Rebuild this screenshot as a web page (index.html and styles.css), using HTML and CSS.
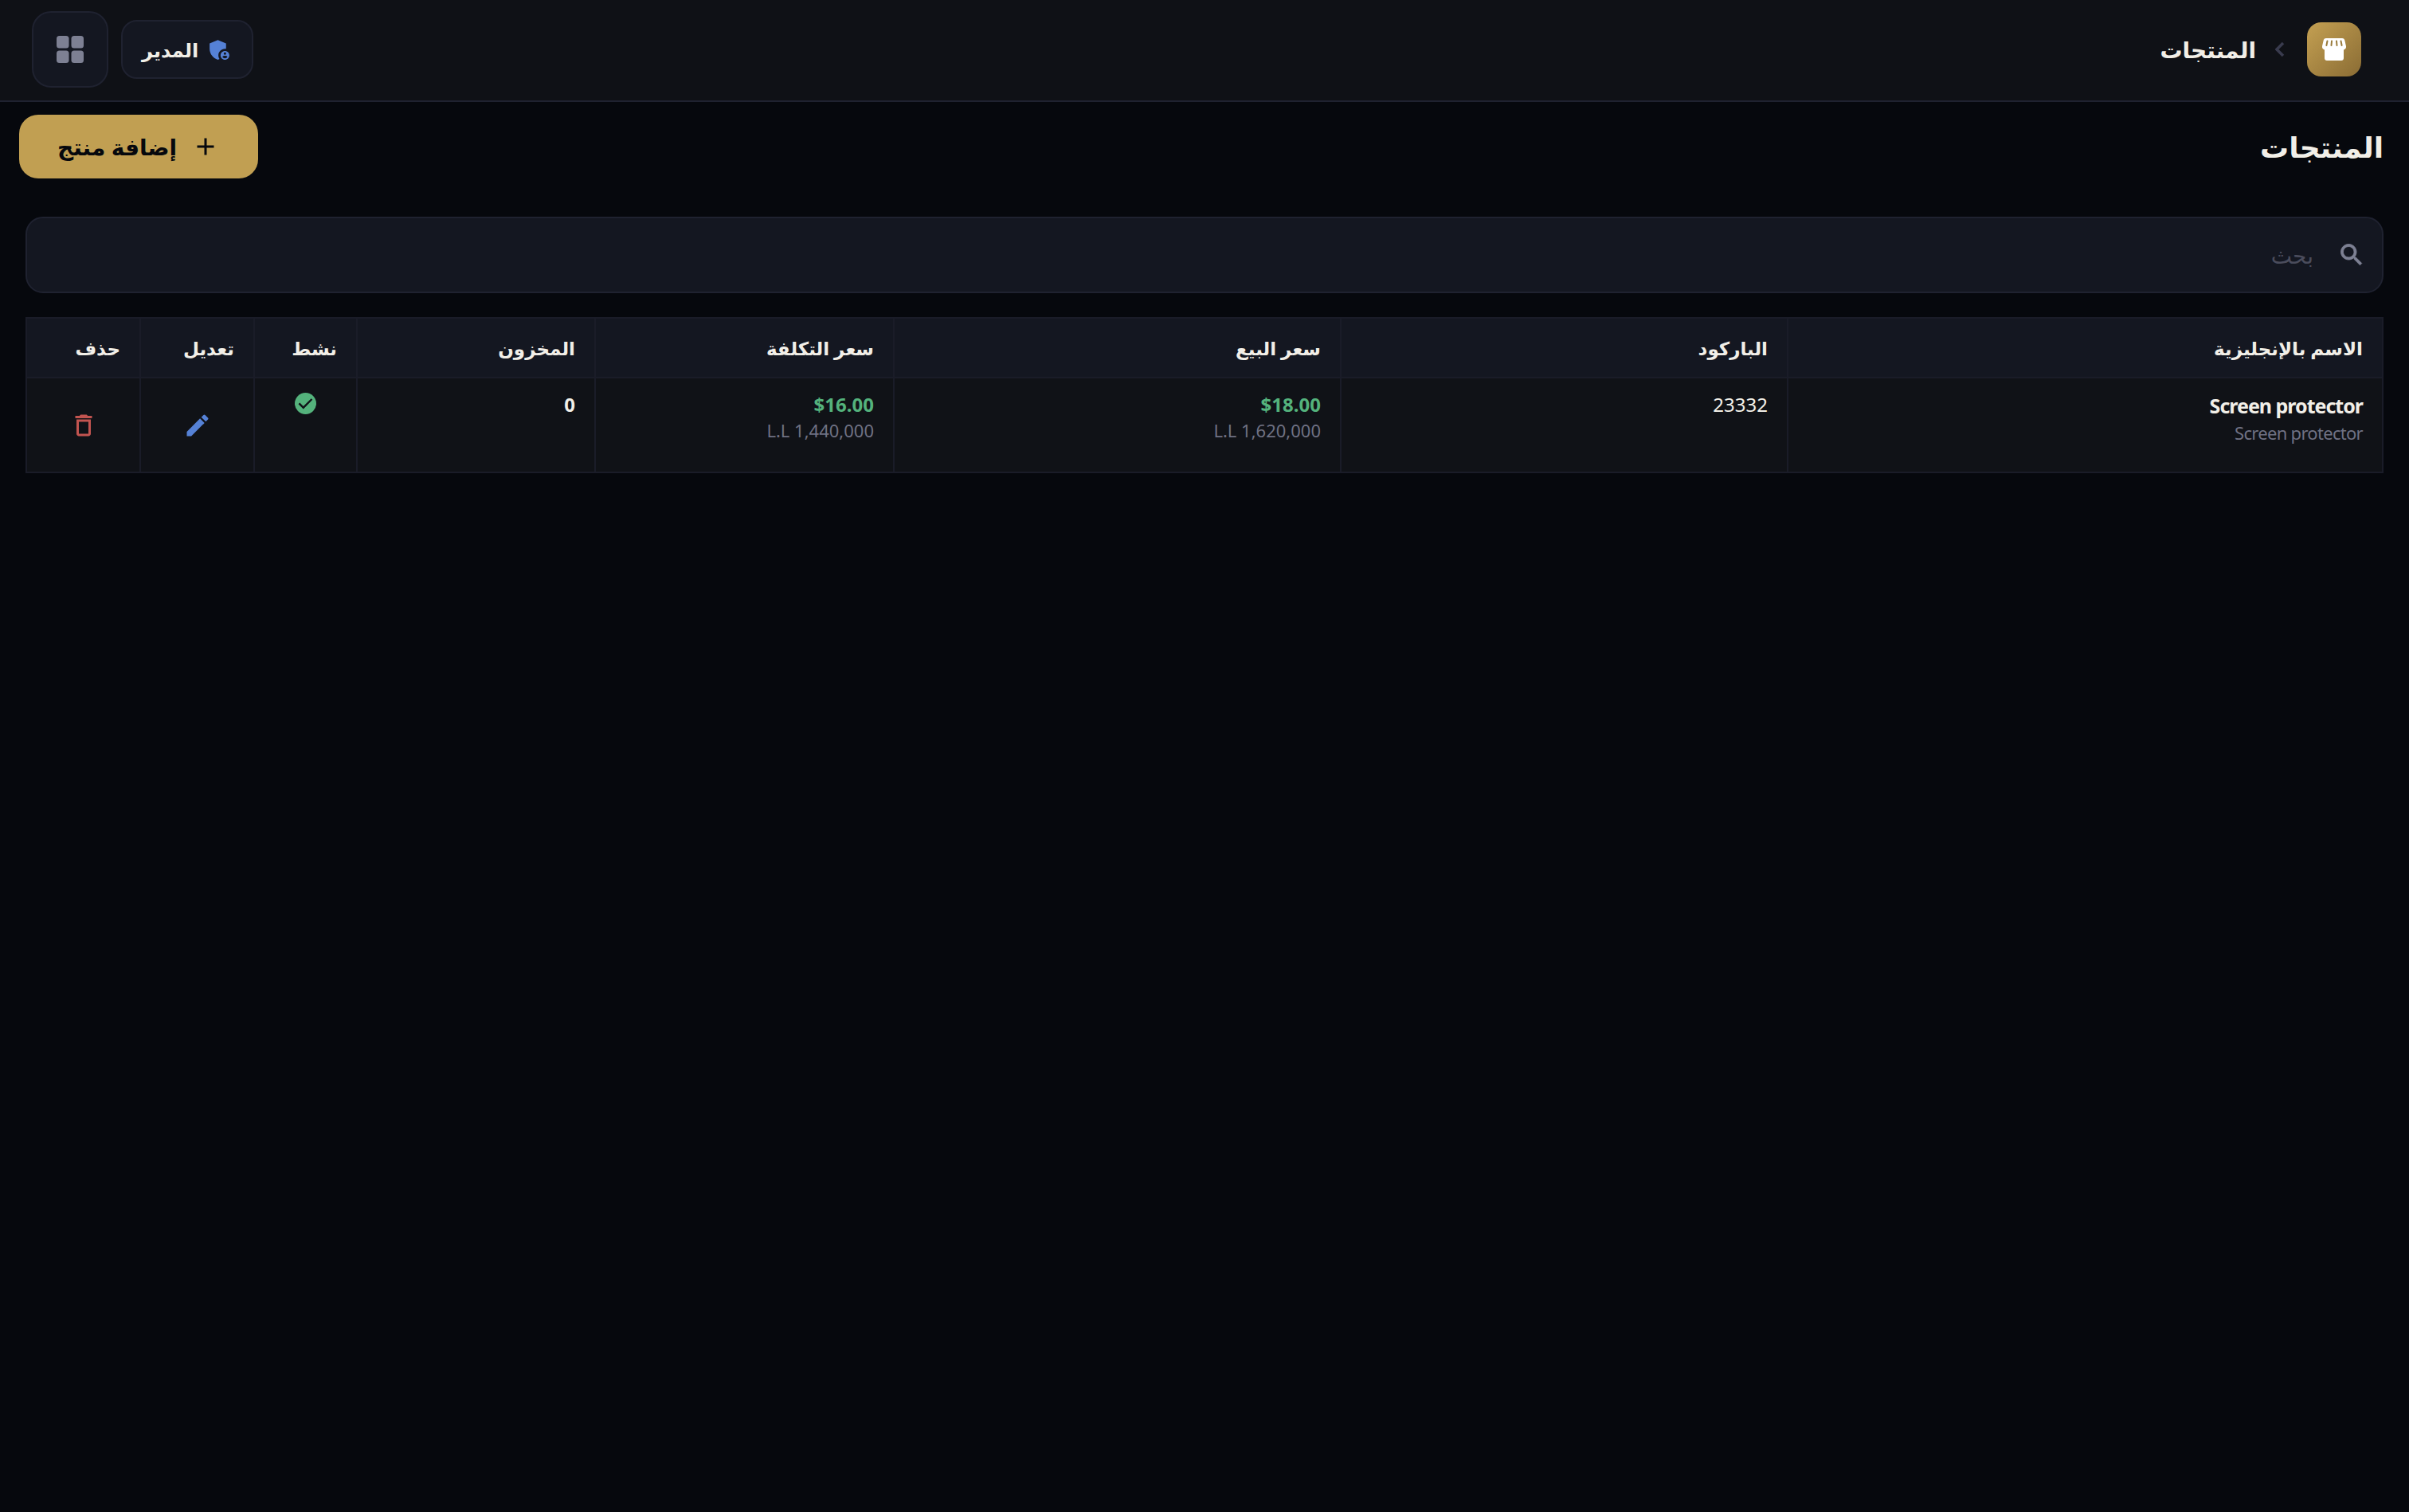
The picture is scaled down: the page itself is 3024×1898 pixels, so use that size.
FILE: index.html
```html
<!DOCTYPE html>
<html lang="ar" dir="rtl">
<head>
    <meta charset="UTF-8">
    <title>المنتجات</title>
    <link rel="stylesheet" href="styles.css">
</head>
<body>
    <header class="topbar">
        <div class="crumbs">
            <div class="logo-box">
                <svg class="logo-icon" viewBox="0 0 30 28">
                    <path d="M5 0h20c2 0 3 1 3.400 3L30 10c.3 2.400-1 4-3 4.500V25c0 1.700-1.300 3-3 3H6c-1.700 0-3-1.300-3-3V14.500C1 14-.3 12.400 0 10l1.600-7C2 1 3 0 5 0z" fill="#fff"/>
                    <path d="M6.500 3.500 5.400 9M12 3.500 11.500 9M18 3.500 18.500 9M23.500 3.500 24.600 9" stroke="#9a7b3c" stroke-width="2" stroke-linecap="round" fill="none"/>
                </svg>
            </div>
            <svg class="crumb-sep" viewBox="0 0 12 20"><path d="M10 2 2 10l8 8" fill="none" stroke="#393b4e" stroke-width="3.500"/></svg>
            <span class="crumb-title">المنتجات</span>
        </div>
        <div class="top-actions">
            <div class="role-chip">
                <svg class="role-icon" viewBox="0 0 24 24"><path d="M17 11c.34 0 .67.04 1 .09V6.270L10.500 3 3 6.270v4.910c0 4.540 3.200 8.790 7.500 9.820.55-.13 1.080-.32 1.600-.55-.69-.98-1.100-2.170-1.100-3.450 0-3.310 2.690-6 6-6z"/><path d="M17 13c-2.210 0-4 1.790-4 4s1.790 4 4 4 4-1.790 4-4-1.790-4-4-4zm0 1.380c.62 0 1.120.51 1.120 1.120s-.51 1.120-1.120 1.120-1.120-.51-1.120-1.120.5-1.120 1.120-1.120zm0 5.370c-.93 0-1.740-.46-2.240-1.170.05-.72 1.510-1.080 2.240-1.080s2.190.36 2.240 1.080c-.5.71-1.310 1.170-2.240 1.170z"/></svg>
                <span>المدير</span>
            </div>
            <button class="grid-btn" type="button">
                <svg class="grid-icon" viewBox="0 0 34 34">
                    <rect x="0" y="0" width="15.500" height="15.500" rx="3.500"/>
                    <rect x="18.500" y="0" width="15.500" height="15.500" rx="3.500"/>
                    <rect x="0" y="18.500" width="15.500" height="15.500" rx="3.500"/>
                    <rect x="18.500" y="18.500" width="15.500" height="15.500" rx="3.500"/>
                </svg>
            </button>
        </div>
    </header>

    <main>
        <div class="page-head">
            <h1>المنتجات</h1>
            <button class="add-btn" type="button">
                <svg class="add-icon" viewBox="0 0 24 24"><path d="M19 13h-6v6h-2v-6H5v-2h6V5h2v6h6v2z"/></svg>
                <span>إضافة منتج</span>
            </button>
        </div>

        <div class="search-box">
            <svg class="search-icon" viewBox="0 0 24 24"><path d="M15.500 14h-.79l-.28-.27C15.410 12.590 16 11.110 16 9.500 16 5.910 13.090 3 9.500 3S3 5.910 3 9.500 5.910 16 9.500 16c1.610 0 3.090-.59 4.230-1.570l.27.28v.79l5 4.990L20.490 19l-4.990-5zm-6 0C7.010 14 5 11.990 5 9.500S7.010 5 9.500 5 14 7.010 14 9.500 11.990 14 9.500 14z"/></svg>
            <input class="search-input" type="text" placeholder="بحث">
        </div>

        <table class="products">
            <colgroup>
                <col class="c-name"><col class="c-barcode"><col class="c-sale"><col class="c-cost">
                <col class="c-stock"><col class="c-active"><col class="c-edit"><col class="c-del">
            </colgroup>
            <thead>
                <tr>
                    <th>الاسم بالإنجليزية</th>
                    <th>الباركود</th>
                    <th>سعر البيع</th>
                    <th>سعر التكلفة</th>
                    <th>المخزون</th>
                    <th>نشط</th>
                    <th>تعديل</th>
                    <th>حذف</th>
                </tr>
            </thead>
            <tbody>
                <tr>
                    <td>
                        <div class="name-main">Screen protector</div>
                        <div class="name-sub">Screen protector</div>
                    </td>
                    <td class="barcode">23332</td>
                    <td>
                        <div class="price">$18.00</div>
                        <div class="price-lbp">L.L 1,620,000</div>
                    </td>
                    <td>
                        <div class="price">$16.00</div>
                        <div class="price-lbp">L.L 1,440,000</div>
                    </td>
                    <td class="stock">0</td>
                    <td class="cell-active">
                        <svg class="check-icon" viewBox="2 2 20 20"><circle cx="12" cy="12" r="10" fill="#54b27c"/><path d="m10 17.200-4.600-4.600 1.300-1.300 3.300 3.300 7.300-7.300 1.200 1.200z" fill="#101217"/></svg>
                    </td>
                    <td class="cell-icon">
                        <svg class="row-icon edit" viewBox="0 0 24 24"><path d="M3 17.250V21h3.750L17.810 9.940l-3.750-3.750L3 17.250zM20.710 7.040c.39-.39.39-1.020 0-1.410l-2.340-2.340a.9959.9959 0 0 0-1.410 0l-1.830 1.830 3.750 3.750 1.830-1.830z"/></svg>
                    </td>
                    <td class="cell-icon">
                        <svg class="row-icon del" viewBox="0 0 24 24"><path d="M6 19c0 1.100.9 2 2 2h8c1.100 0 2-.9 2-2V7H6v12zM8 9h8v10H8V9zm7.500-5-1-1h-5l-1 1H5v2h14V4h-3.500z"/></svg>
                    </td>
                </tr>
            </tbody>
        </table>
    </main>
</body>
</html>
```

FILE: styles.css
```css
* {
    box-sizing: border-box;
}
body {
    margin: 0;
    min-height: 1898px;
    background-color: #06080d;
    color: #f2efe8;
    font-family: "Noto Sans", "DejaVu Sans", sans-serif;
}
.topbar {
    display: flex;
    align-items: center;
    justify-content: space-between;
    height: 128px;
    padding: 0 60px 2px 40px;
    background-color: #0f1116;
    border-bottom: 2px solid #1f2230;
}
.crumbs {
    display: flex;
    align-items: center;
}
.logo-box {
    display: flex;
    align-items: center;
    justify-content: center;
    width: 68px;
    height: 68px;
    border-radius: 18px;
    background: linear-gradient(135deg, #c4a052, #8a6c34);
}
.logo-icon {
    width: 30px;
    height: 28px;
}
.crumb-sep {
    width: 12px;
    height: 20px;
    margin: 0 28px 0 24px;
}
.crumb-title {
    font-size: 28px;
    font-weight: 700;
}
.top-actions {
    display: flex;
    align-items: center;
    gap: 16px;
}
.role-chip {
    display: flex;
    align-items: center;
    gap: 10px;
    height: 74px;
    padding: 0 24px;
    background-color: #141721;
    border: 2px solid #1f2230;
    border-radius: 20px;
    font-size: 24px;
    font-weight: 700;
}
.role-icon {
    width: 33px;
    height: 33px;
    fill: #5581d6;
}
.grid-btn {
    display: flex;
    align-items: center;
    justify-content: center;
    width: 96px;
    height: 96px;
    padding: 0;
    background-color: #141721;
    border: 2px solid #1f2230;
    border-radius: 24px;
}
.grid-icon {
    width: 34px;
    height: 34px;
    fill: #7d8093;
}
.page-head {
    display: flex;
    align-items: center;
    justify-content: space-between;
    height: 80px;
    margin: 16px 0 48px;
    padding: 0 32px 0 24px;
}
h1 {
    margin: 0;
    font-size: 36px;
    font-weight: 700;
}
.add-btn {
    display: flex;
    align-items: center;
    gap: 18px;
    height: 80px;
    padding: 0 48px;
    background-color: #c19f52;
    border: none;
    border-radius: 24px;
    color: #06080d;
    font-family: inherit;
    font-size: 28px;
    font-weight: 700;
}
.add-icon {
    width: 36px;
    height: 36px;
    fill: #06080d;
}
.search-box {
    display: flex;
    align-items: center;
    gap: 28px;
    height: 96px;
    margin: 0 32px;
    padding: 0 20px;
    background-color: #141721;
    border: 2px solid #1f2230;
    border-radius: 22px;
}
.search-icon {
    width: 36px;
    height: 36px;
    fill: #7d8093;
    stroke: #7d8093;
    stroke-width: 0.6;
}
.search-input {
    flex: 1;
    background: none;
    border: none;
    outline: none;
    color: #f2efe8;
    font-family: inherit;
    font-size: 28px;
}
.search-input::placeholder {
    color: #4a4c5c;
}
.products {
    width: 2958px;
    margin: 30px 32px 0;
    table-layout: fixed;
    border-collapse: collapse;
    background-color: #101217;
    border: 2px solid #1f2230;
}
.c-name { width: 747px; }
.c-barcode { width: 561px; }
.c-sale { width: 561px; }
.c-cost { width: 375px; }
.c-stock { width: 299px; }
.c-active { width: 129px; }
.c-edit { width: 143px; }
.c-del { width: 143px; }
th {
    height: 75px;
    padding: 0 24px;
    background-color: #141721;
    border: 2px solid #1a1c28;
    text-align: right;
    font-size: 23px;
    font-weight: 700;
}
td {
    height: 119px;
    padding: 16px 24px;
    border: 2px solid #1a1c28;
    text-align: right;
    vertical-align: top;
    font-size: 24px;
}
.name-main {
    font-size: 25px;
    font-weight: 700;
    letter-spacing: -1px;
    line-height: 36px;
}
.name-sub {
    color: #6f7183;
    font-size: 22px;
    letter-spacing: -0.7px;
    line-height: 32px;
}
.barcode {
    line-height: 34px;
}
.price {
    color: #54b27c;
    font-size: 24px;
    font-weight: 700;
    line-height: 34px;
}
.price-lbp {
    color: #6f7183;
    font-size: 22px;
    line-height: 30px;
}
.stock {
    font-weight: 700;
    line-height: 34px;
}
.cell-active {
    text-align: center;
    padding: 18px 0 0;
}
.check-icon {
    display: inline-block;
    width: 27px;
    height: 27px;
}
td.cell-icon {
    text-align: center;
    vertical-align: middle;
    padding: 0;
}
.row-icon {
    display: inline-block;
    width: 36px;
    height: 36px;
    vertical-align: middle;
}
.edit { fill: #5581d6; }
.del { fill: #c25450; }
```
